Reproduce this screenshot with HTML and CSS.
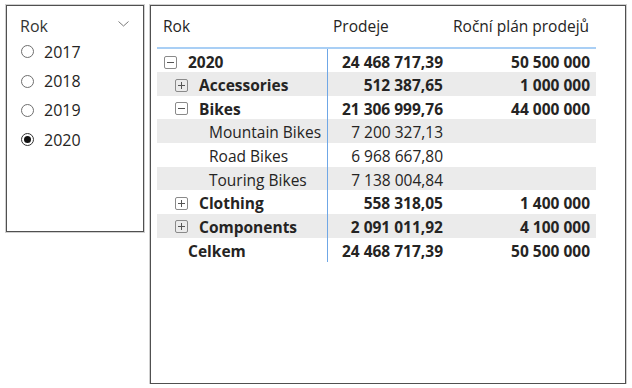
FILE: index.html
```html
<!DOCTYPE html>
<html lang="cs">
<head>
  <meta charset="UTF-8" />
  <title>Prodeje</title>
  <link rel="stylesheet" href="styles.css">
</head>
<body>
  <div class="slicer">
    <div class="slicer-head">
      <span>Rok</span>
      <svg class="chevron" width="11" height="6" viewBox="0 0 11 6"><path d="M0.5 0.5 L5.5 5 L10.5 0.5" fill="none" stroke="#7a7a7a" stroke-width="1"/></svg>
    </div>
    <div class="option"><span class="radio"></span>2017</div>
    <div class="option"><span class="radio"></span>2018</div>
    <div class="option"><span class="radio"></span>2019</div>
    <div class="option"><span class="radio checked"></span>2020</div>
  </div>

  <div class="visual">
    <div class="grid">
      <div class="row head">
        <div class="cell">Rok</div>
        <div class="cell">Prodeje</div>
        <div class="cell">Roční plán prodejů</div>
      </div>

      <div class="row bold first">
        <div class="cell lvl0"><span class="toggle minus"></span>2020</div>
        <div class="cell num">24 468 717,39</div>
        <div class="cell num">50 500 000</div>
      </div>
      <div class="row bold shade">
        <div class="cell lvl1"><span class="toggle plus"></span>Accessories</div>
        <div class="cell num">512 387,65</div>
        <div class="cell num">1 000 000</div>
      </div>
      <div class="row bold">
        <div class="cell lvl1"><span class="toggle minus"></span>Bikes</div>
        <div class="cell num">21 306 999,76</div>
        <div class="cell num">44 000 000</div>
      </div>
      <div class="row shade">
        <div class="cell lvl2">Mountain Bikes</div>
        <div class="cell num">7 200 327,13</div>
        <div class="cell num"></div>
      </div>
      <div class="row">
        <div class="cell lvl2">Road Bikes</div>
        <div class="cell num">6 968 667,80</div>
        <div class="cell num"></div>
      </div>
      <div class="row shade">
        <div class="cell lvl2">Touring Bikes</div>
        <div class="cell num">7 138 004,84</div>
        <div class="cell num"></div>
      </div>
      <div class="row bold">
        <div class="cell lvl1"><span class="toggle plus"></span>Clothing</div>
        <div class="cell num">558 318,05</div>
        <div class="cell num">1 400 000</div>
      </div>
      <div class="row bold shade">
        <div class="cell lvl1"><span class="toggle plus"></span>Components</div>
        <div class="cell num">2 091 011,92</div>
        <div class="cell num">4 100 000</div>
      </div>
      <div class="row bold">
        <div class="cell total">Celkem</div>
        <div class="cell num">24 468 717,39</div>
        <div class="cell num">50 500 000</div>
      </div>
    </div>
  </div>
</body>
</html>
```

FILE: styles.css
```css
body {
  margin: 0;
  padding: 5px 0 0 6px;
  display: flex;
  gap: 6px;
  align-items: flex-start;
  font-family: 'Open Sans', 'Noto Sans', sans-serif;
  font-size: 15.5px;
  color: #252423;
  background: #fff;
}

/* slicer */
.slicer {
  width: 136px;
  height: 225px;
  border: 1px solid #505050;
  box-shadow: 0 0 0 1px #d0d0d0;
}

.slicer-head {
  display: flex;
  justify-content: space-between;
  align-items: center;
  padding: 9px 14px 0 13px;
  height: 22px;
  font-size: 16px;
  color: #333;
}

.chevron {
  margin-top: -5px;
}

.option {
  display: flex;
  align-items: center;
  height: 29.4px;
  padding-left: 14px;
  font-size: 16px;
  color: #252423;
}

.radio {
  width: 11px;
  height: 11px;
  border: 1px solid #6e6e6e;
  border-radius: 50%;
  margin-right: 10px;
  position: relative;
}

.radio.checked {
  border-color: #333;
}

.radio.checked::after {
  content: "";
  position: absolute;
  left: 2px;
  top: 2px;
  width: 7px;
  height: 7px;
  border-radius: 50%;
  background: #111;
}

/* table visual */
.visual {
  width: 474px;
  height: 377px;
  border: 1px solid #505050;
  box-shadow: 0 0 0 1px #d0d0d0;
}

.grid {
  margin-left: 6px;
  width: 439px;
}

.row {
  display: grid;
  grid-template-columns: 170px 120px 149px;
  height: 23.67px;
  align-items: center;
}

.row.head {
  height: 41px;
  border-bottom: 2px solid #a9cff5;
}

.row.head .cell {
  padding-left: 6px;
  padding-bottom: 3px;
}

.row.first {
  height: 23px;
}

.row.shade {
  background: #ebebeb;
}

.row.bold {
  font-weight: bold;
}

.cell {
  box-sizing: border-box;
  height: 100%;
  display: flex;
  align-items: center;
  white-space: nowrap;
  padding-top: 2px;
}

.row:not(.head) .cell:nth-child(2) {
  border-left: 1px solid #6fa7e6;
}

.num {
  justify-content: flex-end;
  padding-right: 4px;
}

.cell.num:nth-child(3) {
  padding-right: 6px;
}

.lvl0 { padding-left: 7px; }
.lvl1 { padding-left: 18px; }
.lvl2 { padding-left: 52px; }
.total { padding-left: 31px; }

.toggle {
  width: 11px;
  height: 11px;
  border: 1px solid #8a8a8a;
  border-radius: 2px;
  margin-right: 11px;
  position: relative;
  flex: none;
}

.toggle::before {
  content: "";
  position: absolute;
  left: 2px;
  top: 5px;
  width: 7px;
  height: 1px;
  background: #555;
}

.toggle.plus::after {
  content: "";
  position: absolute;
  left: 5px;
  top: 2px;
  width: 1px;
  height: 7px;
  background: #555;
}
```
